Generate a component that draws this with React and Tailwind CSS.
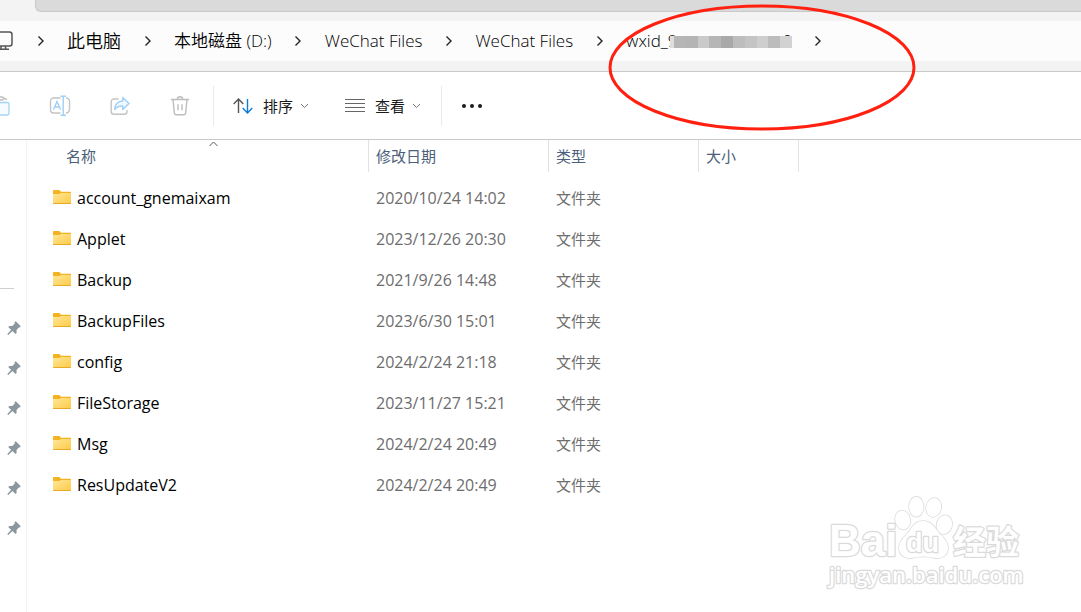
import { useState } from 'react';

const CRUMBS = [
  { label: '此电脑', size: 'text-[18px]' },
  { label: '本地磁盘 (D:)', size: 'text-[17px]' },
  { label: 'WeChat Files', size: 'text-[17px]' },
  { label: 'WeChat Files', size: 'text-[17px]' },
];

const FOLDERS = [
  { name: 'account_gnemaixam', date: '2020/10/24 14:02' },
  { name: 'Applet', date: '2023/12/26 20:30' },
  { name: 'Backup', date: '2021/9/26 14:48' },
  { name: 'BackupFiles', date: '2023/6/30 15:01' },
  { name: 'config', date: '2024/2/24 21:18' },
  { name: 'FileStorage', date: '2023/11/27 15:21' },
  { name: 'Msg', date: '2024/2/24 20:49' },
  { name: 'ResUpdateV2', date: '2024/2/24 20:49' },
];

const PINNED = [1, 2, 3, 4, 5, 6];

// Censored part of the account id
const MOSAIC = [
  'bg-[#b6b6b6]',
  'bg-[#b4b4b4]',
  'bg-[#cacaca]',
  'bg-[#b6b6b6]',
  'bg-[#a9a9a9]',
  'bg-[#bdbdbd]',
  'bg-[#c4c4c4]',
  'bg-[#cecece]',
  'bg-[#bcbcbc]',
  'bg-[#d2d2d2]',
];

function CrumbChevron() {
  return (
    <svg width="8" height="12" viewBox="0 0 8 12" fill="none" stroke="#222" strokeWidth="1.4" aria-hidden="true">
      <path d="M1.5 1.5 6 6 1.5 10.5" />
    </svg>
  );
}

function SmallChevron({ up = false }) {
  return (
    <svg width="9" height="6" viewBox="0 0 9 6" fill="none" stroke={up ? '#555' : '#777'} strokeWidth="1" aria-hidden="true">
      <path d={up ? 'M.5 5 4.5 1l4 4' : 'M1 1l3.5 3.5L8 1'} />
    </svg>
  );
}

function MonitorIcon() {
  return (
    <svg width="20" height="20" viewBox="0 0 20 20" fill="none" stroke="#555" strokeWidth="1.5" aria-hidden="true">
      <rect x="1" y="1" width="18" height="14" rx="2.5" />
      <path d="M8 15v3M12.5 15v3M4.5 18.2H16" />
    </svg>
  );
}

function PasteIcon() {
  return (
    <svg width="20" height="20" viewBox="0 0 20 20" fill="none" strokeWidth="1.3" aria-hidden="true">
      <path d="M8 18.5H4.5a2 2 0 0 1-2-2v-12a2 2 0 0 1 2-2H7M13 2.5h1.5a2 2 0 0 1 2 1.5" stroke="#bdbdbd" />
      <rect x="7" y="1" width="6.5" height="3" rx="1.5" stroke="#bdbdbd" />
      <rect x="9" y="6.5" width="10" height="12.5" rx="1.8" stroke="#a3d3f5" fill="#f5fbff" />
    </svg>
  );
}

function RenameIcon() {
  return (
    <svg width="22" height="22" viewBox="0 0 22 22" fill="none" strokeWidth="1.4" aria-hidden="true">
      <path d="M11.5 3H4.5a3 3 0 0 0-3 3v9a3 3 0 0 0 3 3h7M17 3a3.5 3.5 0 0 1 3.5 3.5v8A3.5 3.5 0 0 1 17 18" stroke="#c4c4c4" />
      <path d="M4.5 14.5 8 6.5l3.5 8M5.7 12h4.6M14.2 1.5v18.5M11.5 1.3h5.5M11.5 20.3h5.5" stroke="#9fd0f6" />
    </svg>
  );
}

function ShareIcon() {
  return (
    <svg width="20" height="20" viewBox="0 0 20 20" fill="none" strokeWidth="1.4" strokeLinejoin="round" aria-hidden="true">
      <path d="M8.5 3H4a2.8 2.8 0 0 0-2.8 2.8v9.7A2.8 2.8 0 0 0 4 18.3h10.2a2.8 2.8 0 0 0 2.8-2.8V14" stroke="#c4c4c4" />
      <path d="M12.8 1.5 19 7.5l-6.2 6V10C8.5 9.7 6.5 11 4.7 13.5 5 8.5 8 5.2 12.8 5z" stroke="#9fd0f6" fill="#f1f9ff" />
    </svg>
  );
}

function TrashIcon() {
  return (
    <svg width="20" height="20" viewBox="0 0 20 20" fill="none" stroke="#bdbdbd" strokeWidth="1.4" aria-hidden="true">
      <path d="M1 3.5h18M7.3 3.5a2.7 2.7 0 0 1 5.4 0M3 3.5l1.3 13.2a2.2 2.2 0 0 0 2.2 2h7a2.2 2.2 0 0 0 2.2-2L17 3.5M8 8.3v6M12 8.3v6" />
    </svg>
  );
}

function SortIcon() {
  return (
    <svg width="20" height="16" viewBox="0 0 20 16" fill="none" strokeWidth="1.4" aria-hidden="true">
      <path d="M5.5 15V1M.7 6l4.8-5 4.8 5" stroke="#555" />
      <path d="M14.5 1v14M9.7 10l4.8 5 4.8-5" stroke="#0f7bd8" />
    </svg>
  );
}

function LinesIcon() {
  return (
    <svg width="20" height="14" viewBox="0 0 20 14" stroke="#666" aria-hidden="true">
      <path d="M0 .5h20M0 4.5h20M0 8.5h20M0 12.5h20" />
    </svg>
  );
}

function PinIcon() {
  return (
    <svg width="14" height="14" viewBox="0 0 14 14" fill="#8b979f" aria-hidden="true">
      <path d="M7.8.5 9 .4l4.6 4.5-.3 1.3-1.5.3-2.3 2.6.1 2.9-1.1 1-3-2.9-4 3.6-1 .1.1-1 3.5-3.9L1.3 6l1-1.1 2.9.1 2.4-2.3z" />
    </svg>
  );
}

function FolderIcon() {
  return (
    <svg className="mb-0.5" width="18" height="14" viewBox="0 0 18 14" aria-hidden="true">
      <defs>
        <linearGradient id="folder" x1="0" y1="0" x2="1" y2="1">
          <stop offset="0" stopColor="#ffe69a" />
          <stop offset="1" stopColor="#fdcb45" />
        </linearGradient>
      </defs>
      <path d="M0 1a1 1 0 0 1 1-1h5.3l1.7 1.7h9.3a.7.7 0 0 1 .7.7V7H0z" fill="#f3b21f" />
      <path d="M0 4h6.3L8 2.9h10v10.4a.7.7 0 0 1-.7.7H.7a.7.7 0 0 1-.7-.7z" fill="url(#folder)" />
      <path d="M0 13h18v.3a.7.7 0 0 1-.7.7H.7a.7.7 0 0 1-.7-.7z" fill="#e9a928" />
    </svg>
  );
}

function Watermark() {
  return (
    <svg
      className="absolute right-[52px] bottom-[16px] pointer-events-none"
      width="204"
      height="102"
      viewBox="0 0 204 102"
      fill="#fff"
      stroke="#dadada"
      strokeWidth="1.5"
      strokeLinejoin="round"
      paintOrder="stroke"
      aria-hidden="true"
    >
      <ellipse cx="77.7" cy="26" rx="7.5" ry="9.5" transform="rotate(-12 77.7 26)" />
      <ellipse cx="91.3" cy="12.7" rx="7.2" ry="10" />
      <ellipse cx="108.7" cy="13.5" rx="7.5" ry="9.5" transform="rotate(10 108.7 13.5)" />
      <ellipse cx="119.3" cy="30.7" rx="7.7" ry="9.5" transform="rotate(15 119.3 30.7)" />
      <path d="M98 27c9 0 12 7 16 12 5 5 9 9 9 15 0 7-6 11-13 10-8-2-16-2-24 0-7 1-12-4-12-10 0-6 4-10 9-15 4-5 6-12 15-12z" />
      <g fontFamily="'Liberation Sans', Arial, sans-serif" fontWeight="700" strokeWidth="2.5">
        <text x="4" y="62" fontSize="44">Bai</text>
        <text x="81" y="58" fontSize="27">du</text>
      </g>
      <text x="128" y="60" fontSize="33" fontWeight="700" strokeWidth="2.5" fontFamily="'Noto Sans CJK SC', sans-serif">
        经验
      </text>
      <text x="4" y="89" fontSize="22" strokeWidth="2.5" fontWeight="600" fontFamily="'Open Sans', sans-serif">
        jingyan.baidu.com
      </text>
    </svg>
  );
}

export default function App() {
  const [selected, setSelected] = useState(null);

  const iconBtn = 'w-[60px] h-10 flex items-center justify-center';
  const thCls = 'p-0 pl-[7px] h-8 border-r border-[#e2e2e2] text-left font-normal';

  return (
    <div className="relative min-h-screen flex flex-col bg-white overflow-hidden text-[15px] text-black font-['Open_Sans','Noto_Sans_CJK_SC',sans-serif]">
      {/* Tab strip */}
      <header className="bg-[#f3f3f3] border-b border-[#c8c8c8] pb-[10px]">
        <div className="ml-[35px] h-3 mb-[9px] rounded-bl-md bg-[#dadada] border-b border-l border-[#c9c9c9]" />

        {/* Address bar */}
        <nav
          className="h-10 bg-[#fcfcfc] flex items-center text-[17px] text-black font-[350] whitespace-nowrap"
          aria-label="路径"
        >
          <span className="w-7 -ml-[7px] shrink-0">
            <MonitorIcon />
          </span>
          <span className="w-[46px] flex justify-center pr-[6px]">
            <CrumbChevron />
          </span>
          {CRUMBS.map((crumb, i) => (
            <span key={i} className="flex items-center">
              <a href="#" className={`${crumb.size} hover:underline`}>{crumb.label}</a>
              <span className="w-[53px] flex justify-center">
                <CrumbChevron />
              </span>
            </span>
          ))}
          <a href="#" className="relative w-[166px]">
            <span className="flex justify-between">
              <span>wxid_9</span>
              <span>0</span>
            </span>
            <span className="absolute left-[44px] right-0 top-[8px] h-3 flex border-l-4 border-[#dedede]">
              {MOSAIC.map((color, i) => (
                <span key={i} className={`flex-1 ${color}`} />
              ))}
            </span>
          </a>
          <span className="w-[51px] flex justify-center">
            <CrumbChevron />
          </span>
        </nav>
      </header>

      {/* Toolbar */}
      <div className="h-[68px] flex items-center border-b border-[#c8c8c8] text-[15px] text-[#1b1b1b]">
        <div className="flex -ml-[30px]">
          <button type="button" className={iconBtn} aria-label="粘贴" disabled><PasteIcon /></button>
          <button type="button" className={iconBtn} aria-label="重命名" disabled><RenameIcon /></button>
          <button type="button" className={iconBtn} aria-label="共享" disabled><ShareIcon /></button>
          <button type="button" className={iconBtn} aria-label="删除" disabled><TrashIcon /></button>
        </div>
        <div className="h-10 ml-[3px] pl-[19px] pr-5 pt-px flex items-center gap-9 border-x border-[#ebebeb]">
          <button type="button" className="flex items-center">
            <SortIcon />
            <span className="ml-[10px] mr-[7px]">排序</span>
            <SmallChevron />
          </button>
          <button type="button" className="flex items-center">
            <LinesIcon />
            <span className="ml-[10px] mr-[7px]">查看</span>
            <SmallChevron />
          </button>
        </div>
        <button type="button" className="ml-5 flex gap-1" aria-label="更多">
          <span className="size-1 rounded-full bg-[#1b1b1b]" />
          <span className="size-1 rounded-full bg-[#1b1b1b]" />
          <span className="size-1 rounded-full bg-[#1b1b1b]" />
        </button>
      </div>

      <div className="flex-1 flex">
        {/* Quick access */}
        <aside className="w-[27px] shrink-0 border-r border-[#f3f3f3] pt-[148px]">
          <hr className="w-[14px] border-[#d0d0d0] mb-[19px]" />
          <ul>
            {PINNED.map((n) => (
              <li key={n} className="h-10 pl-[7px] flex items-center">
                <PinIcon />
              </li>
            ))}
          </ul>
        </aside>

        {/* File list */}
        <main className="flex-1">
          <table className="w-full table-fixed border-separate border-spacing-0">
            <colgroup>
              <col className="w-[342px]" />
              <col className="w-[180px]" />
              <col className="w-[150px]" />
              <col className="w-[100px]" />
              <col />
            </colgroup>
            <thead className="text-[#4c607a]">
              <tr>
                <th className="relative p-0 pl-[39px] h-8 border-r border-[#e2e2e2] text-left font-normal">
                  <button type="button">名称</button>
                  <span className="absolute left-[182px] top-px">
                    <SmallChevron up />
                  </span>
                </th>
                <th className={thCls}><button type="button">修改日期</button></th>
                <th className={thCls}><button type="button">类型</button></th>
                <th className={thCls}><button type="button">大小</button></th>
                <td />
              </tr>
            </thead>
            <tbody className="text-[#6d6d6d] before:block before:h-[6px]">
              {FOLDERS.map((folder) => (
                <tr
                  key={folder.name}
                  onClick={() => setSelected(folder.name)}
                  className={selected === folder.name ? 'bg-[#cce8ff]' : 'hover:bg-[#e5f3ff]'}
                >
                  <td className="p-0 h-[41px] pl-[26px] pb-0.5">
                    <span className="flex items-center gap-[6px] text-base text-black">
                      <FolderIcon />
                      {folder.name}
                    </span>
                  </td>
                  <td className="p-0 pl-[7px] pb-0.5 text-base">{folder.date}</td>
                  <td className="p-0 pl-[7px]">文件夹</td>
                  <td />
                  <td />
                </tr>
              ))}
            </tbody>
          </table>
        </main>
      </div>

      {/* Red marker around the account folder */}
      <svg className="absolute left-[608px] top-[4px] pointer-events-none" width="308" height="128" viewBox="0 0 308 128" aria-hidden="true">
        <ellipse cx="154" cy="63.5" rx="152" ry="61.5" fill="none" stroke="#ff2010" strokeWidth="3" />
      </svg>

      <Watermark />
    </div>
  );
}
